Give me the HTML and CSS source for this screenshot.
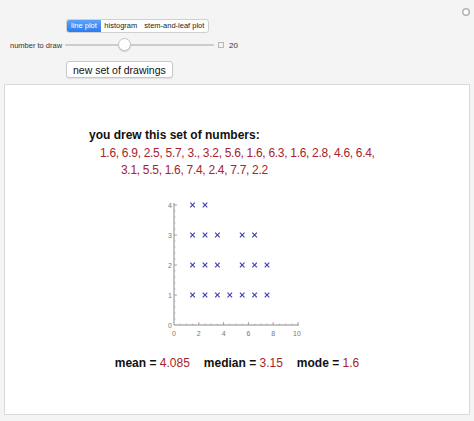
FILE: index.html
```html
<!DOCTYPE html>
<html lang="en">
<head>
  <meta charset="UTF-8">
  <title>Line Plot</title>
  <link rel="stylesheet" href="styles.css">
</head>
<body>
  <svg class="gear" width="10" height="10" viewBox="0 0 10 10"><circle cx="5" cy="5" r="3.3" fill="#fff" stroke="#b4b4b4" stroke-width="1.6"/></svg>

  <div class="controls">
    <div class="tabs">
      <span class="tab active">line plot</span>
      <span class="tab">histogram</span>
      <span class="tab">stem-and-leaf plot</span>
    </div>

    <div class="label">number to draw</div>
    <div class="slider-row">
      <div class="slider">
        <div class="track"></div>
        <div class="thumb"></div>
      </div>
      <span class="plus"></span>
      <span class="value">20</span>
    </div>

    <button class="redraw">new set of drawings</button>
  </div>

  <div class="panel">
    <div class="numbers">
      <div class="title">you drew this set of numbers:</div>
      <div class="line first">1.6, 6.9, 2.5, 5.7, 3., 3.2, 5.6, 1.6, 6.3, 1.6, 2.8, 4.6, 6.4,</div>
      <div class="line second">3.1, 5.5, 1.6, 7.4, 2.4, 7.7, 2.2</div>
    </div>

    <svg class="plot" width="140" height="142" viewBox="0 0 140 142">
      <defs>
        <path id="x" d="M-2.3,-2.3 L2.3,2.3 M2.3,-2.3 L-2.3,2.3" stroke="#4343b0" stroke-width="1.2"/>
      </defs>
      <!-- axes -->
      <path d="M9,6 V128 H134" fill="none" stroke="#8a8a8a" stroke-width="1"/>
      <!-- y ticks -->
      <path d="M9,98 h3 M9,68 h3 M9,38 h3 M9,8 h3" stroke="#8a8a8a" stroke-width="0.8"/>
      <path d="M9,122 h1.5 M9,116 h1.5 M9,110 h1.5 M9,104 h1.5 M9,92 h1.5 M9,86 h1.5 M9,80 h1.5 M9,74 h1.5 M9,62 h1.5 M9,56 h1.5 M9,50 h1.5 M9,44 h1.5 M9,32 h1.5 M9,26 h1.5 M9,20 h1.5 M9,14 h1.5" stroke="#9a9a9a" stroke-width="0.6"/>
      <!-- x ticks -->
      <path d="M33.8,128 v-3 M58.6,128 v-3 M83.4,128 v-3 M108.2,128 v-3 M133,128 v-3" stroke="#8a8a8a" stroke-width="0.8"/>
      <path d="M15.2,128 v-1.5 M21.4,128 v-1.5 M27.6,128 v-1.5 M40,128 v-1.5 M46.2,128 v-1.5 M52.4,128 v-1.5 M64.8,128 v-1.5 M71,128 v-1.5 M77.2,128 v-1.5 M89.6,128 v-1.5 M95.8,128 v-1.5 M102,128 v-1.5 M114.4,128 v-1.5 M120.6,128 v-1.5 M126.8,128 v-1.5" stroke="#9a9a9a" stroke-width="0.6"/>
      <g class="ticklabel" text-anchor="end">
        <text x="7" y="130.5">0</text>
        <text x="7" y="100.5">1</text>
        <text x="7" y="70.5">2</text>
        <text x="7" y="40.5">3</text>
        <text x="7" y="10.5">4</text>
      </g>
      <g class="ticklabel" text-anchor="middle">
        <text x="9" y="138.5">0</text>
        <text x="33.8" y="138.5">2</text>
        <text x="58.6" y="138.5">4</text>
        <text x="83.4" y="138.5">6</text>
        <text x="108.2" y="138.5">8</text>
        <text x="132" y="138.5">10</text>
      </g>
      <!-- data -->
      <use href="#x" x="27.6" y="98"/><use href="#x" x="27.6" y="68"/><use href="#x" x="27.6" y="38"/><use href="#x" x="27.6" y="8"/>
      <use href="#x" x="40" y="98"/><use href="#x" x="40" y="68"/><use href="#x" x="40" y="38"/><use href="#x" x="40" y="8"/>
      <use href="#x" x="52.4" y="98"/><use href="#x" x="52.4" y="68"/><use href="#x" x="52.4" y="38"/>
      <use href="#x" x="64.8" y="98"/>
      <use href="#x" x="77.2" y="98"/><use href="#x" x="77.2" y="68"/><use href="#x" x="77.2" y="38"/>
      <use href="#x" x="89.6" y="98"/><use href="#x" x="89.6" y="68"/><use href="#x" x="89.6" y="38"/>
      <use href="#x" x="102" y="98"/><use href="#x" x="102" y="68"/>
    </svg>

    <div class="stats">
      <span><b>mean = </b><span class="red">4.085</span></span>
      <span><b>median = </b><span class="red">3.15</span></span>
      <span><b>mode = </b><span class="red">1.6</span></span>
    </div>
  </div>
</body>
</html>
```

FILE: styles.css
```css
body {
  margin: 0;
  background-color: #f4f4f4;
  font-family: "Liberation Sans", Arial, sans-serif;
  position: relative;
  height: 421px;
}
.gear {
  position: absolute;
  top: 7px;
  right: 3px;
}
.controls {
  display: grid;
  grid-template-columns: 56px auto;
  align-items: center;
  justify-items: start;
  padding: 19px 0 0 10px;
  height: 65px;
  box-sizing: border-box;
  align-content: start;
}
.tabs {
  grid-column: 2;
  display: flex;
  height: 14px;
  border: 1px solid #d0d0d0;
  border-radius: 3px;
  background: #fff;
  box-sizing: border-box;
  overflow: hidden;
}
.tab {
  font-size: 7.5px;
  line-height: 12px;
  padding: 0 3.5px;
  color: #222;
}
.tab.active {
  background: linear-gradient(#5aa2fb, #2b7cf0);
  color: #fff;
  padding: 0 4px;
}
.label {
  grid-column: 1;
  font-size: 7.5px;
  color: #333;
  margin-top: 5px;
}
.slider-row {
  grid-column: 2;
  display: flex;
  align-items: center;
  height: 14px;
  margin-top: 5px;
  margin-left: -1px;
}
.slider {
  position: relative;
  width: 149px;
  height: 14px;
}
.track {
  position: absolute;
  left: 0;
  right: 0;
  top: 6px;
  height: 2px;
  background: #cdcdcd;
  border-radius: 1px;
}
.thumb {
  position: absolute;
  left: 53px;
  top: 0;
  width: 13px;
  height: 13px;
  border-radius: 50%;
  background: #fff;
  border: 1px solid #c4c4c4;
  box-shadow: 0 1px 1px rgba(0, 0, 0, 0.15);
  box-sizing: border-box;
}
.plus {
  width: 4px;
  height: 4px;
  border: 1px solid #b8b8b8;
  margin-left: 4px;
}
.value {
  font-size: 8px;
  color: #333;
  margin-left: 5px;
}
.redraw {
  grid-column: 2;
  margin-top: 9px;
  height: 17px;
  padding: 0 6px;
  font-family: "Liberation Sans", Arial, sans-serif;
  font-size: 10.5px;
  color: #111;
  background: #fff;
  border: 1px solid #c8c8c8;
  border-radius: 3px;
  box-shadow: 0 1px 1px rgba(0, 0, 0, 0.08);
}
.panel {
  margin: 19px 4px 0 4px;
  height: 331px;
  box-sizing: border-box;
  background: #fff;
  border: 1px solid #d9d9d9;
  display: flex;
  flex-direction: column;
  align-items: center;
  padding-top: 42px;
}
.numbers {
  font-size: 12px;
  line-height: 17.5px;
  width: 294px;
  margin-left: -2px;
}
.title {
  font-weight: bold;
  color: #111;
}
.line {
  color: #a8232b;
  white-space: nowrap;
  letter-spacing: -0.3px;
}
.line.first {
  padding-left: 11px;
}
.line.second {
  padding-left: 32px;
}
.plot {
  margin-top: 17px;
  margin-left: -4px;
}
.ticklabel {
  font-family: "Liberation Sans", Arial, sans-serif;
  font-size: 7px;
  fill: #777;
}
.stats {
  display: flex;
  gap: 14px;
  font-size: 12px;
  line-height: 17px;
  margin-top: 16px;
  color: #111;
}
.red {
  color: #a8232b;
}
```
